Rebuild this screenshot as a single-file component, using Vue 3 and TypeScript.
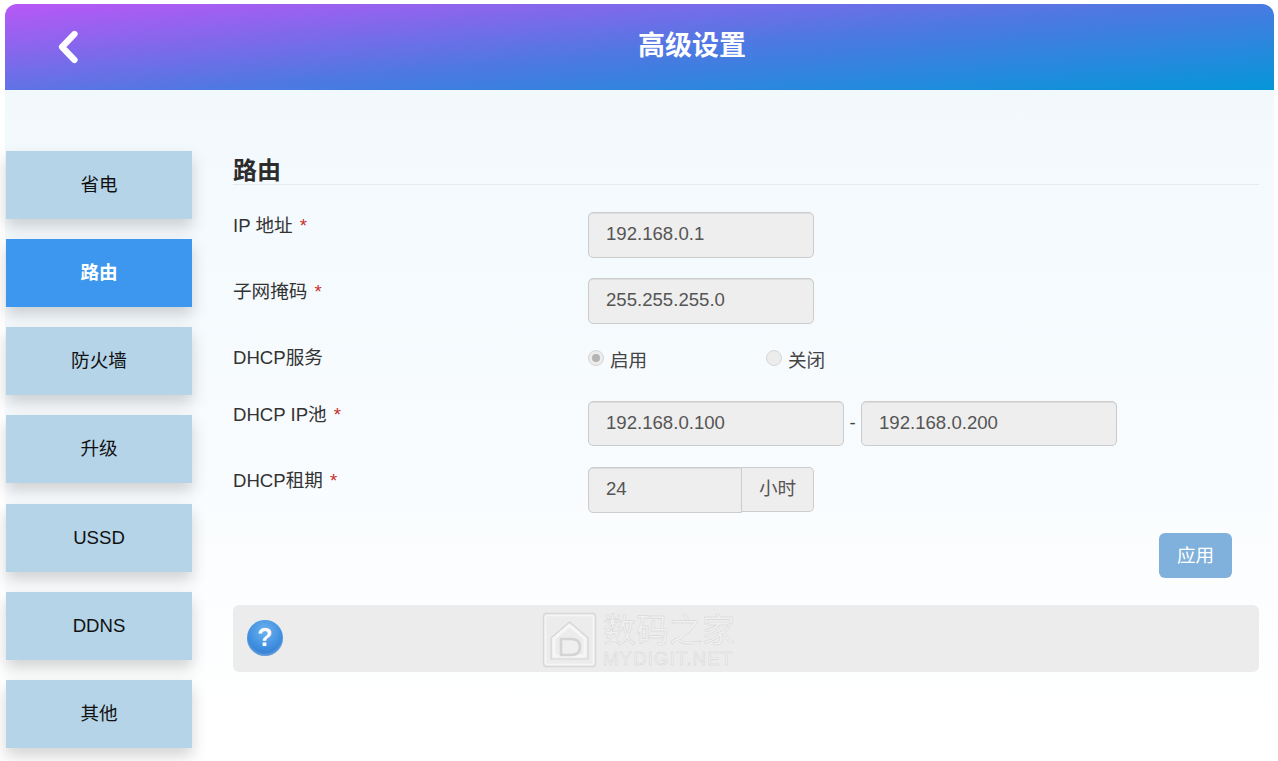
<script setup lang="ts">
const menu: string[] = ['省电', '路由', '防火墙', '升级', 'USSD', 'DDNS', '其他']
const active = '路由'
</script>

<template>
  <div class="page">
    <header class="top">
      <svg class="back" width="24" height="34" viewBox="0 0 24 34" fill="none">
        <path d="M18.5 4 L6 17 L18.5 30" stroke="#fff" stroke-width="6.2" stroke-linecap="round" stroke-linejoin="round" />
      </svg>
      <h1 class="page-title">高级设置</h1>
    </header>

    <div class="body">
      <nav class="side">
        <a v-for="m in menu" :key="m" class="side-item" :class="{ on: m === active }">{{ m }}</a>
      </nav>

      <main class="main">
        <h2 class="title">路由</h2>

        <div class="row">
          <label class="lab">IP 地址 <em>*</em></label>
          <input class="inp w226" readonly value="192.168.0.1" />
        </div>
        <div class="row">
          <label class="lab">子网掩码 <em>*</em></label>
          <input class="inp w226" readonly value="255.255.255.0" />
        </div>
        <div class="row radios">
          <label class="lab">DHCP服务</label>
          <span class="radio first"><i class="dot checked"></i>启用</span>
          <span class="radio"><i class="dot"></i>关闭</span>
        </div>
        <div class="row">
          <label class="lab">DHCP IP池 <em>*</em></label>
          <input class="inp w256 short" readonly value="192.168.0.100" />
          <span class="dash">-</span>
          <input class="inp w256 short" readonly value="192.168.0.200" />
        </div>
        <div class="row">
          <label class="lab">DHCP租期 <em>*</em></label>
          <input class="inp w154 joined" readonly value="24" />
          <span class="addon">小时</span>
        </div>

        <div class="actions">
          <button class="apply" type="button">应用</button>
        </div>

        <div class="help">
          <span class="q">?</span>
        </div>
        <div class="mark">
          <svg width="55" height="56" viewBox="0 0 55 56" fill="none">
            <rect x="1.5" y="1.5" width="52" height="53" rx="3" stroke="#d8d8d8" stroke-width="1.5" />
            <rect x="3.5" y="3.5" width="48" height="49" rx="2" stroke="#f6f6f6" stroke-width="1.5" />
            <path d="M9 26 L27.5 10 L46 26 V47 H9 Z" stroke="#d6d6d6" stroke-width="1.2" stroke-linejoin="round" />
            <path d="M12 26.5 L27.5 13.5 L43 26.5 V44 H12 Z" stroke="#f6f6f6" stroke-width="3" stroke-linejoin="round" />
            <path d="M19 27 H29 Q38 27 38 35 Q38 43 29 43 H19 Z" stroke="#d4d4d4" stroke-width="2.6" fill="#efefef" />
          </svg>
          <div class="mark-text">
            <span class="mark-cn">数码之家</span>
            <span class="mark-en">MYDIGIT.NET</span>
          </div>
        </div>
      </main>
    </div>
  </div>
</template>

<style scoped>
.page {
  box-sizing: border-box;
  width: 1278px;
  height: 761px;
  padding: 4px 4px 0 5px;
  overflow: hidden;
  position: relative;
  background: #fff;
  font-family: "Liberation Sans", "Noto Sans CJK SC", sans-serif;
  font-size: 18.6px;
  color: #333;
}
.top {
  height: 86px;
  border-radius: 12px 12px 0 0;
  background: linear-gradient(175deg, #b957f6 0%, #4f78e2 52%, #0596d8 100%);
  display: flex;
  align-items: center;
  position: relative;
}
.back {
  margin-left: 51px;
  margin-top: -1px;
}
.page-title {
  position: absolute;
  left: 633px;
  top: 0;
  margin: 0;
  font-size: 27px;
  line-height: 85px;
  font-weight: 700;
  color: #fff;
}
.body {
  height: 671px;
  display: flex;
  padding: 61px 0 0 1px;
  box-sizing: border-box;
  background: linear-gradient(180deg, #f2f9fd 0%, #f7fbfe 45%, #ffffff 95%);
}
.side {
  width: 186px;
  flex: none;
  display: flex;
  flex-direction: column;
  gap: 20.17px;
}
.side-item {
  height: 68px;
  line-height: 67px;
  text-align: center;
  background: #b5d4e8;
  color: #111;
  box-shadow: 0 8px 14px rgba(60, 60, 60, 0.22);
}
.side-item.on {
  background: #3e97ee;
  color: #fff;
  font-weight: 700;
}
.main {
  width: 1026px;
  margin-left: 41px;
  flex: none;
}
.title {
  margin: 0 0 27px;
  height: 33px;
  line-height: 39px;
  font-size: 24px;
  font-weight: 700;
  color: #2c2c2c;
  border-bottom: 1px solid #e6eaed;
}
.row {
  display: flex;
  align-items: flex-start;
  height: 46px;
  margin-bottom: 20px;
}
.row.radios {
  height: 37px;
}
.lab {
  width: 355px;
  flex: none;
  line-height: 27px;
  color: #333;
}
.lab em {
  font-style: normal;
  color: #c9302c;
  margin-left: 2px;
}
.inp {
  box-sizing: border-box;
  height: 46px;
  padding: 0 17px 2px;
  border: 1px solid #ccc;
  border-radius: 5px;
  background: #eee;
  color: #555;
  font: inherit;
  outline: none;
  box-shadow: inset 0 1px 1px rgba(0, 0, 0, 0.075);
}
.inp.short {
  height: 45px;
}
.w226 { width: 226px; }
.w256 { width: 256px; }
.w154 { width: 154px; }
.joined {
  border-radius: 5px 0 0 5px;
}
.dash {
  width: 17px;
  text-align: center;
  line-height: 44px;
  color: #444;
}
.addon {
  box-sizing: border-box;
  width: 72px;
  height: 45px;
  border: 1px solid #ccc;
  border-left: 0;
  border-radius: 0 5px 5px 0;
  background: #eee;
  color: #555;
  text-align: center;
  line-height: 42px;
}
.radio {
  display: flex;
  align-items: flex-start;
  line-height: 33px;
  color: #444;
}
.radio.first {
  width: 178px;
}
.dot {
  box-sizing: border-box;
  width: 16px;
  height: 16px;
  margin: 6px 6px 0 0;
  border-radius: 50%;
  border: 1px solid #d6d6d6;
  background: #ececec;
  display: block;
  position: relative;
}
.dot.checked::after {
  content: "";
  position: absolute;
  left: 3px;
  top: 3px;
  width: 8px;
  height: 8px;
  border-radius: 50%;
  background: #b4b4b4;
}
.actions {
  display: flex;
  justify-content: flex-end;
  padding-right: 27px;
}
.apply {
  width: 73px;
  height: 45px;
  padding: 0 0 5px;
  border: 0;
  border-radius: 6px;
  background: #80b0dc;
  color: #fff;
  font: inherit;
}
.help {
  box-sizing: border-box;
  height: 67px;
  margin-top: 27px;
  padding: 15px 0 0 14px;
  border-radius: 6px;
  background: #ececec;
}
.q {
  display: block;
  width: 36px;
  height: 36px;
  border-radius: 50%;
  background: radial-gradient(circle at 50% 30%, #6fb2ee 0%, #3f8fe0 55%, #2a6fc4 100%);
  box-shadow: inset 0 -2px 2px rgba(255, 255, 255, 0.25);
  color: #fff;
  font-size: 25px;
  font-weight: 700;
  line-height: 35px;
  text-align: center;
}
.mark {
  position: absolute;
  left: 542px;
  top: 612px;
  display: flex;
  gap: 6px;
}
.mark-text {
  display: flex;
  flex-direction: column;
}
.mark-cn {
  font-size: 33px;
  line-height: 37px;
  color: #f0f0f0;
  -webkit-text-stroke: 0.4px #d2d2d2;
}
.mark-en {
  font-size: 18.5px;
  letter-spacing: 1.2px;
  line-height: 20px;
  color: #f0f0f0;
  -webkit-text-stroke: 0.4px #d2d2d2;
}
</style>

<style>
html, body { margin: 0; background: #fff; }
</style>
